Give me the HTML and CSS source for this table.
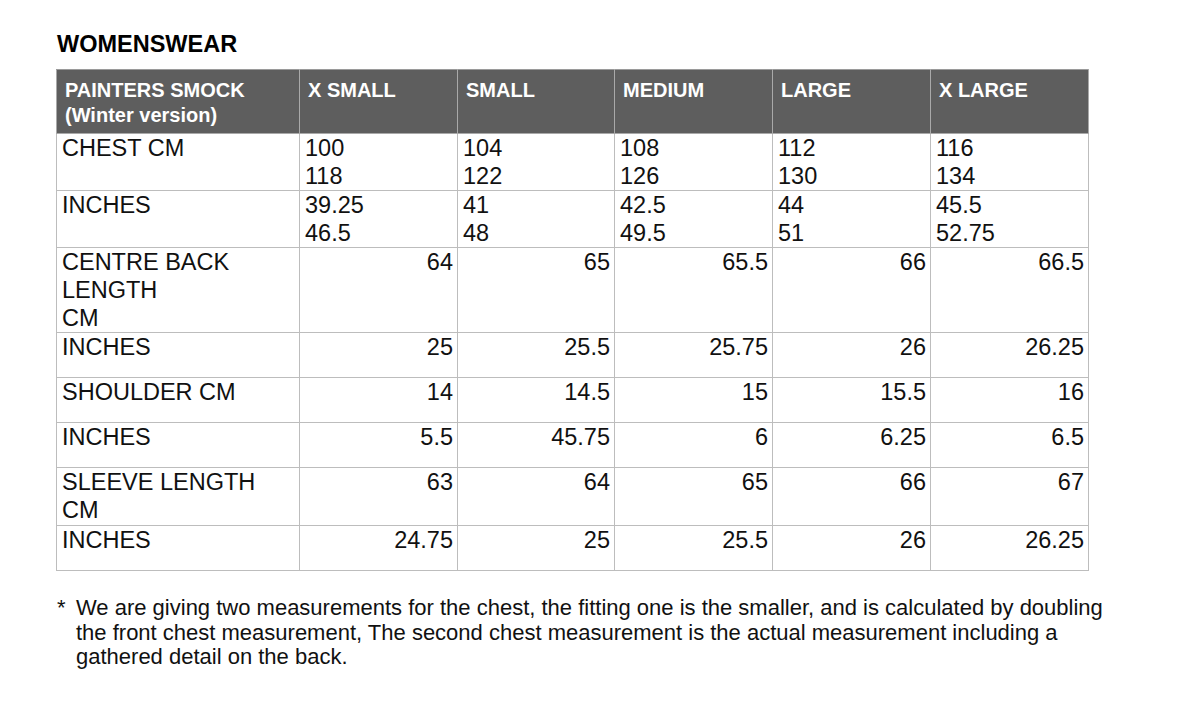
FILE: index.html
```html
<!DOCTYPE html>
<html>
<head>
<meta charset="utf-8">
<link rel="stylesheet" href="styles.css">
</head>
<body>
<div class="page">
  <h1 class="title">WOMENSWEAR</h1>
  <table class="sizes">
    <colgroup>
      <col class="c-label"><col class="c-size"><col class="c-size-b"><col class="c-size"><col class="c-size"><col class="c-size">
    </colgroup>
    <thead>
      <tr class="r-head">
        <th>PAINTERS SMOCK<br>(Winter version)</th>
        <th>X SMALL</th><th>SMALL</th><th>MEDIUM</th><th>LARGE</th><th>X LARGE</th>
      </tr>
    </thead>
    <tbody>
      <tr class="r-two">
        <td>CHEST CM</td>
        <td class="l">100<br>118</td><td class="l">104<br>122</td><td class="l">108<br>126</td><td class="l">112<br>130</td><td class="l">116<br>134</td>
      </tr>
      <tr class="r-two">
        <td>INCHES</td>
        <td class="l">39.25<br>46.5</td><td class="l">41<br>48</td><td class="l">42.5<br>49.5</td><td class="l">44<br>51</td><td class="l">45.5<br>52.75</td>
      </tr>
      <tr class="r-three">
        <td>CENTRE BACK<br>LENGTH<br>CM</td>
        <td class="n">64</td><td class="n">65</td><td class="n">65.5</td><td class="n">66</td><td class="n">66.5</td>
      </tr>
      <tr class="r-one">
        <td>INCHES</td>
        <td class="n">25</td><td class="n">25.5</td><td class="n">25.75</td><td class="n">26</td><td class="n">26.25</td>
      </tr>
      <tr class="r-one">
        <td>SHOULDER CM</td>
        <td class="n">14</td><td class="n">14.5</td><td class="n">15</td><td class="n">15.5</td><td class="n">16</td>
      </tr>
      <tr class="r-one">
        <td>INCHES</td>
        <td class="n">5.5</td><td class="n">45.75</td><td class="n">6</td><td class="n">6.25</td><td class="n">6.5</td>
      </tr>
      <tr class="r-sleeve">
        <td>SLEEVE LENGTH<br>CM</td>
        <td class="n">63</td><td class="n">64</td><td class="n">65</td><td class="n">66</td><td class="n">67</td>
      </tr>
      <tr class="r-one">
        <td>INCHES</td>
        <td class="n">24.75</td><td class="n">25</td><td class="n">25.5</td><td class="n">26</td><td class="n">26.25</td>
      </tr>
    </tbody>
  </table>
  <div class="note">
    <span class="star">*</span>
    <p class="note-text">We are giving two measurements for the chest, the fitting one is the smaller, and is calculated by doubling the front chest measurement, The second chest measurement is the actual measurement including a gathered detail on the back.</p>
  </div>
</div>
</body>
</html>
```
FILE: styles.css
```css
html, body {
  margin: 0;
  padding: 0;
  background: #ffffff;
}
body {
  font-family: "Liberation Sans", Arial, Helvetica, sans-serif;
  color: #111111;
}
.page {
  padding: 30px 0 0 56px;
}
.title {
  margin: 0 0 11px 1px;
  font-size: 23.5px;
  line-height: 28px;
  font-weight: bold;
  color: #000;
}
.sizes {
  border-collapse: collapse;
  table-layout: fixed;
  width: 1032px;
  border: 1px solid #cfcfcf;
}
.c-label { width: 243px; }
.c-size { width: 158px; }
.c-size-b { width: 157px; }
.sizes th,
.sizes td {
  border: 1px solid #bdbdbd;
  vertical-align: top;
  text-align: left;
  box-sizing: border-box;
}
.sizes th {
  background: #5e5e5e;
  color: #ffffff;
  font-size: 20px;
  line-height: 25px;
  font-weight: bold;
  padding: 8px 8px 0 8px;
  border-color: #a9a9a9;
  border-top-color: #9a9a9a;
}
.r-head { height: 64px; }
.sizes td {
  font-size: 23.5px;
  line-height: 28px;
  padding: 0 4px 0 5px;
  color: #111;
}
.sizes td.n { text-align: right; }
.r-two { height: 56px; }
.r-three { height: 84px; }
.r-one { height: 45px; }
.r-sleeve { height: 58px; }
.note {
  display: flex;
  margin-top: 25px;
  font-size: 22px;
  line-height: 24.5px;
  color: #111;
}
.star {
  width: 19px;
  flex: none;
  padding-left: 1px;
}
.note-text {
  margin: 0;
  width: 1040px;
}
```
